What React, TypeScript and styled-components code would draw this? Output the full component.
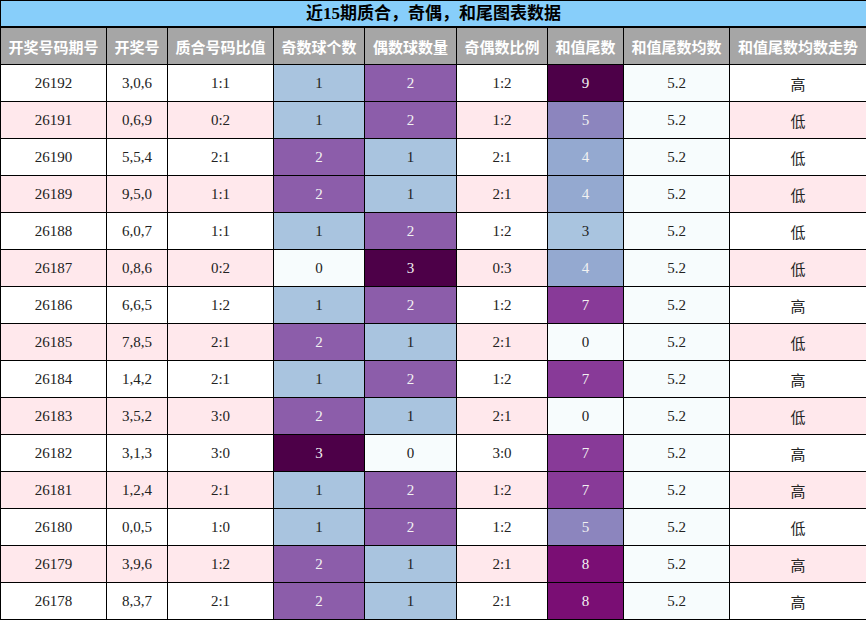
import React from "react";
import styled, { createGlobalStyle } from "styled-components";

const GlobalStyle = createGlobalStyle`
  html, body { margin: 0; padding: 0; background: #ffffff; }
  body { font-family: "Liberation Serif", "Noto Sans CJK SC", serif; }
`;

type Row = {
  issue: string;
  nums: string;
  primeRatio: string;
  odd: number;
  even: number;
  oeRatio: string;
  tail: number;
  avg: string;
  trend: string;
};

const rows: Row[] = [
  { issue: "26192", nums: "3,0,6", primeRatio: "1:1", odd: 1, even: 2, oeRatio: "1:2", tail: 9, avg: "5.2", trend: "高" },
  { issue: "26191", nums: "0,6,9", primeRatio: "0:2", odd: 1, even: 2, oeRatio: "1:2", tail: 5, avg: "5.2", trend: "低" },
  { issue: "26190", nums: "5,5,4", primeRatio: "2:1", odd: 2, even: 1, oeRatio: "2:1", tail: 4, avg: "5.2", trend: "低" },
  { issue: "26189", nums: "9,5,0", primeRatio: "1:1", odd: 2, even: 1, oeRatio: "2:1", tail: 4, avg: "5.2", trend: "低" },
  { issue: "26188", nums: "6,0,7", primeRatio: "1:1", odd: 1, even: 2, oeRatio: "1:2", tail: 3, avg: "5.2", trend: "低" },
  { issue: "26187", nums: "0,8,6", primeRatio: "0:2", odd: 0, even: 3, oeRatio: "0:3", tail: 4, avg: "5.2", trend: "低" },
  { issue: "26186", nums: "6,6,5", primeRatio: "1:2", odd: 1, even: 2, oeRatio: "1:2", tail: 7, avg: "5.2", trend: "高" },
  { issue: "26185", nums: "7,8,5", primeRatio: "2:1", odd: 2, even: 1, oeRatio: "2:1", tail: 0, avg: "5.2", trend: "低" },
  { issue: "26184", nums: "1,4,2", primeRatio: "2:1", odd: 1, even: 2, oeRatio: "1:2", tail: 7, avg: "5.2", trend: "高" },
  { issue: "26183", nums: "3,5,2", primeRatio: "3:0", odd: 2, even: 1, oeRatio: "2:1", tail: 0, avg: "5.2", trend: "低" },
  { issue: "26182", nums: "3,1,3", primeRatio: "3:0", odd: 3, even: 0, oeRatio: "3:0", tail: 7, avg: "5.2", trend: "高" },
  { issue: "26181", nums: "1,2,4", primeRatio: "2:1", odd: 1, even: 2, oeRatio: "1:2", tail: 7, avg: "5.2", trend: "高" },
  { issue: "26180", nums: "0,0,5", primeRatio: "1:0", odd: 1, even: 2, oeRatio: "1:2", tail: 5, avg: "5.2", trend: "低" },
  { issue: "26179", nums: "3,9,6", primeRatio: "1:2", odd: 2, even: 1, oeRatio: "2:1", tail: 8, avg: "5.2", trend: "高" },
  { issue: "26178", nums: "8,3,7", primeRatio: "2:1", odd: 2, even: 1, oeRatio: "2:1", tail: 8, avg: "5.2", trend: "高" },
];

const headers = [
  "开奖号码期号",
  "开奖号",
  "质合号码比值",
  "奇数球个数",
  "偶数球数量",
  "奇偶数比例",
  "和值尾数",
  "和值尾数均数",
  "和值尾数均数走势",
];

const colWidths = [106, 61, 106, 91, 92, 91, 76, 106, 137];

const countColor: Record<number, string> = {
  0: "#f7fcfd",
  1: "#a9c4df",
  2: "#8c5daa",
  3: "#4d0048",
};

const tailColor: Record<number, string> = {
  0: "#f7fcfd",
  1: "#bfd3e6",
  2: "#b0cbe2",
  3: "#a9c4df",
  4: "#94a9d0",
  5: "#8c85be",
  6: "#8a5fac",
  7: "#883a98",
  8: "#7a0e74",
  9: "#4d0048",
};

const darkText = (bg: string) => {
  const light = ["#f7fcfd", "#a9c4df", "#bfd3e6", "#b0cbe2"];
  return light.includes(bg) ? "#222222" : "#f2f2f2";
};

const Table = styled.table`
  width: 866px;
  border-collapse: collapse;
  table-layout: fixed;
  font-family: "Liberation Serif", "Noto Sans CJK SC", serif;
`;

const TitleCell = styled.th`
  height: 25px;
  padding: 0;
  background: #87cefa;
  border: 1px solid #000;
  border-bottom: 2px solid #000;
  color: #000;
  font-size: 17px;
  font-weight: 700;
  text-align: center;
  line-height: 24px;
`;

const HeadCell = styled.th`
  height: 36px;
  padding: 0;
  background: #a6a6a6;
  border: 1px solid #000;
  color: #ffffff;
  font-family: "Noto Sans CJK SC", sans-serif;
  font-size: 15px;
  font-weight: 700;
  text-align: center;
  white-space: nowrap;
`;

const BodyRow = styled.tr`
  height: 37px;
`;

const Cell = styled.td<{ $bg: string; $fg?: string; $cjk?: boolean }>`
  padding: 0;
  border: 1px solid #000;
  background: ${(p) => p.$bg};
  color: ${(p) => p.$fg ?? "#222222"};
  font-family: ${(p) =>
    p.$cjk ? `"Noto Sans CJK SC", sans-serif` : `"Liberation Serif", serif`};
  font-size: 15px;
  text-align: center;
  vertical-align: middle;
`;

export default function App() {
  return (
    <>
      <GlobalStyle />
      <Table>
        <colgroup>
          {colWidths.map((w, i) => (
            <col key={i} style={{ width: w }} />
          ))}
        </colgroup>
        <thead>
          <tr>
            <TitleCell colSpan={9}>近15期质合，奇偶，和尾图表数据</TitleCell>
          </tr>
          <tr>
            {headers.map((h) => (
              <HeadCell key={h}>{h}</HeadCell>
            ))}
          </tr>
        </thead>
        <tbody>
          {rows.map((r, i) => {
            const base = i % 2 === 0 ? "#ffffff" : "#ffe8ec";
            const oddBg = countColor[r.odd];
            const evenBg = countColor[r.even];
            const tBg = tailColor[r.tail];
            return (
              <BodyRow key={r.issue}>
                <Cell $bg={base}>{r.issue}</Cell>
                <Cell $bg={base}>{r.nums}</Cell>
                <Cell $bg={base}>{r.primeRatio}</Cell>
                <Cell $bg={oddBg} $fg={darkText(oddBg)}>{r.odd}</Cell>
                <Cell $bg={evenBg} $fg={darkText(evenBg)}>{r.even}</Cell>
                <Cell $bg={base}>{r.oeRatio}</Cell>
                <Cell $bg={tBg} $fg={darkText(tBg)}>{r.tail}</Cell>
                <Cell $bg="#f7fcfd">{r.avg}</Cell>
                <Cell $bg={base} $cjk>{r.trend}</Cell>
              </BodyRow>
            );
          })}
        </tbody>
      </Table>
    </>
  );
}
